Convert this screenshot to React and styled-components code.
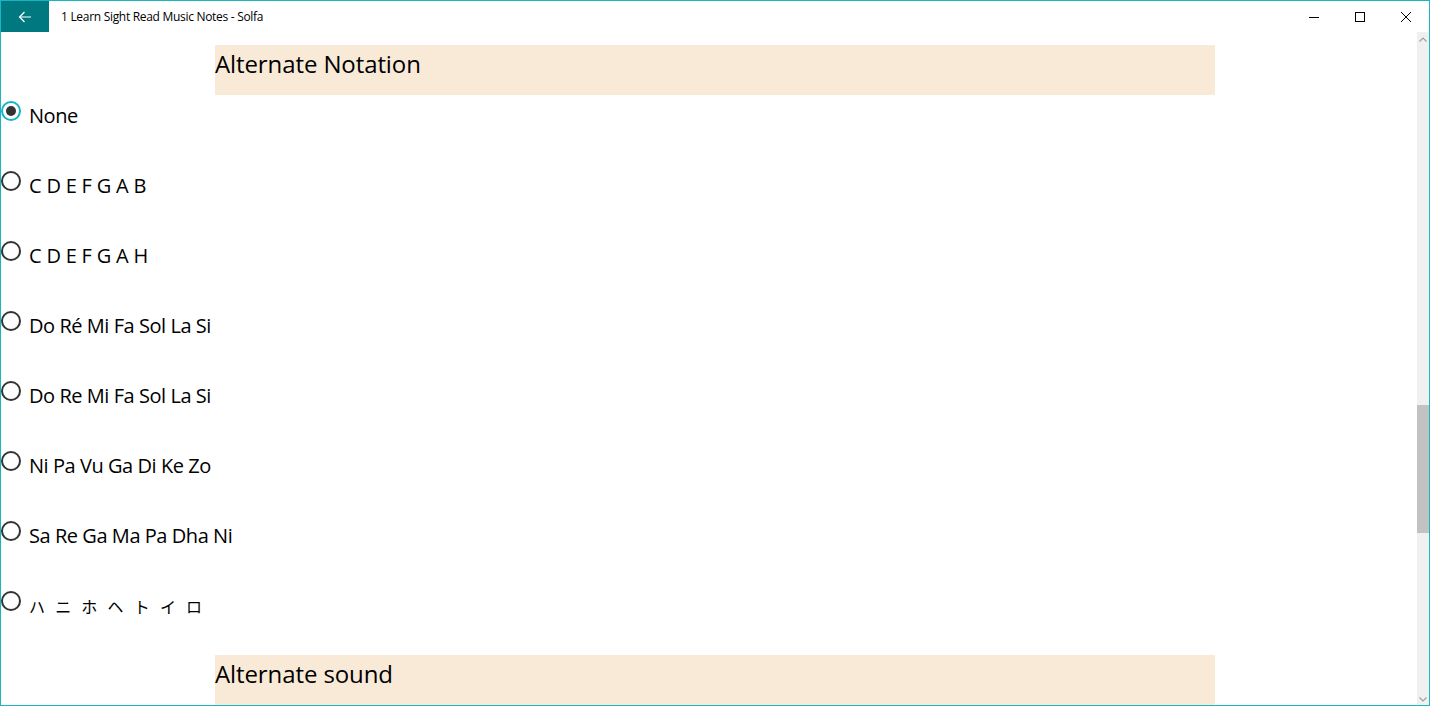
import React from 'react'
import styled, { createGlobalStyle } from 'styled-components'

const Global = createGlobalStyle`
html, body {
  margin: 0;
  padding: 0;
  overflow: hidden;
  background: #fff;
}
* { box-sizing: border-box; }
`;

const Window = styled.div`
width: 1430px;
height: 706px;
border: 1px solid #1ab4c4;
display: flex;
flex-direction: column;
background: #fff;
font-family: "Open Sans", "Noto Sans", sans-serif;
color: #000;
overflow: hidden;
`;

const TitleBar = styled.div`
height: 31px;
flex: none;
display: flex;
flex-direction: row;
align-items: stretch;
`;

const BackButton = styled.div`
width: 48px;
background: #00787f;
display: flex;
align-items: center;
justify-content: center;
`;

const Title = styled.div`
margin-left: 12px;
font-size: 12px;
letter-spacing: -0.3px;
line-height: 31px;
color: #000;
flex: 1;
`;

const Caption = styled.div`
width: 46px;
display: flex;
align-items: center;
justify-content: center;
`;

const Body = styled.div`
flex: 1;
display: flex;
flex-direction: row;
min-height: 0;
`;

const Content = styled.div`
flex: 1;
display: flex;
flex-direction: column;
overflow: hidden;
`;

const Header = styled.div`
margin-left: 214px;
margin-top: ${p => p.$top}px;
width: 1000px;
height: 50px;
flex: none;
background: #f9ead7;
font-size: 24px;
letter-spacing: -0.1px;
line-height: 32px;
padding-top: 3px;
color: #000;
`;

const RadioList = styled.div`
display: flex;
flex-direction: column;
gap: 42px;
padding-top: 6px;
`;

const RadioRow = styled.div`
display: flex;
flex-direction: row;
align-items: flex-start;
gap: 8px;
height: 28px;
`;

const Circle = styled.div`
width: 20px;
height: 20px;
flex: none;
border-radius: 50%;
border: 2px solid ${p => (p.$checked ? '#17b2c5' : '#333')};
display: flex;
align-items: center;
justify-content: center;
&::after {
  content: '';
  display: ${p => (p.$checked ? 'block' : 'none')};
  width: 10px;
  height: 10px;
  border-radius: 50%;
  background: #333;
}
`;

const Label = styled.div`
margin-top: 1px;
font-size: ${p => p.$size || 20}px;
line-height: 28px;
color: #000;
white-space: nowrap;
font-family: ${p => (p.$cjk ? '"Noto Sans CJK JP", sans-serif' : '"Open Sans", sans-serif')};
letter-spacing: ${p => (p.$spacing !== undefined ? p.$spacing : -0.45)}px;
`;

const Scrollbar = styled.div`
width: 12px;
flex: none;
background: #f0f0f0;
display: flex;
flex-direction: column;
align-items: center;
`;

const ScrollArrow = styled.div`
height: 12px;
display: flex;
align-items: center;
justify-content: center;
margin-top: ${p => p.$top || 0}px;
`;

const Track = styled.div`
flex: 1;
width: 100%;
display: flex;
flex-direction: column;
padding-top: 360px;
`;

const Thumb = styled.div`
height: 128px;
width: 100%;
background: #c2c2c2;
`;

const options = [
  { text: 'None', checked: true },
  { text: 'C D E F G A B', spacing: -0.2 },
  { text: 'C D E F G A H', spacing: -0.2 },
  { text: 'Do Ré Mi Fa Sol La Si' },
  { text: 'Do Re Mi Fa Sol La Si' },
  { text: 'Ni Pa Vu Ga Di Ke Zo' },
  { text: 'Sa Re Ga Ma Pa Dha Ni' },
  { text: 'ハ ニ ホ ヘ ト イ ロ', cjk: true, size: 16, spacing: 3.3 },
];

export default function App() {
  return (
    <>
      <Global />
      <Window>
        <TitleBar>
          <BackButton>
            <svg width="14" height="12" viewBox="0 0 14 12">
              <path d="M13 6H1.5M6.5 1L1.5 6l5 5" stroke="#fff" strokeWidth="1.2" fill="none" />
            </svg>
          </BackButton>
          <Title>1 Learn Sight Read Music Notes - Solfa</Title>
          <Caption>
            <svg width="10" height="10" viewBox="0 0 10 10">
              <path d="M0 5.5h10" stroke="#000" strokeWidth="1" />
            </svg>
          </Caption>
          <Caption>
            <svg width="10" height="10" viewBox="0 0 10 10">
              <rect x="0.5" y="0.5" width="9" height="9" stroke="#000" strokeWidth="1" fill="none" />
            </svg>
          </Caption>
          <Caption>
            <svg width="10" height="10" viewBox="0 0 10 10">
              <path d="M0 0L10 10M10 0L0 10" stroke="#000" strokeWidth="1" />
            </svg>
          </Caption>
        </TitleBar>
        <Body>
          <Content>
            <Header $top={13}>Alternate Notation</Header>
            <RadioList>
              {options.map(o => (
                <RadioRow key={o.text}>
                  <Circle $checked={o.checked} />
                  <Label $cjk={o.cjk} $size={o.size} $spacing={o.spacing}>{o.text}</Label>
                </RadioRow>
              ))}
            </RadioList>
            <Header $top={36}>Alternate sound</Header>
          </Content>
          <Scrollbar>
            <ScrollArrow $top={1}>
              <svg width="8" height="5" viewBox="0 0 8 5">
                <path d="M0.5 4.5L4 1l3.5 3.5" stroke="#a0a0a0" strokeWidth="1.2" fill="none" />
              </svg>
            </ScrollArrow>
            <Track>
              <Thumb />
            </Track>
            <ScrollArrow>
              <svg width="8" height="5" viewBox="0 0 8 5">
                <path d="M0.5 0.5L4 4l3.5-3.5" stroke="#a0a0a0" strokeWidth="1.2" fill="none" />
              </svg>
            </ScrollArrow>
          </Scrollbar>
        </Body>
      </Window>
    </>
  )
}
